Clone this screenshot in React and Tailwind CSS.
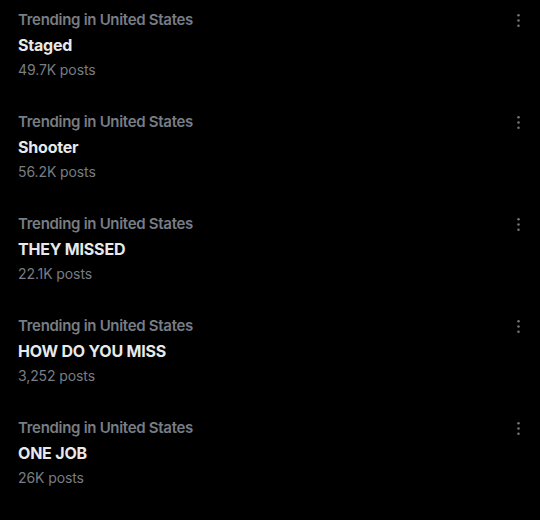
const trends = [
  { topic: "Staged", posts: "49.7K posts" },
  { topic: "Shooter", posts: "56.2K posts" },
  { topic: "THEY MISSED", posts: "22.1K posts" },
  { topic: "HOW DO YOU MISS", posts: "3,252 posts" },
  { topic: "ONE JOB", posts: "26K posts" },
];

function MoreIcon() {
  return (
    <svg viewBox="0 0 24 24" className="w-[19px] h-[19px]" fill="#71767b">
      <circle cx="12" cy="5.5" r="1.6" />
      <circle cx="12" cy="12" r="1.6" />
      <circle cx="12" cy="18.5" r="1.6" />
    </svg>
  );
}

export default function App() {
  return (
    <div
      className="w-[540px] h-[520px] bg-black overflow-hidden"
      style={{ fontFamily: "Inter, 'Noto Sans', sans-serif" }}
    >
      {trends.map((t, i) => (
        <div
          key={i}
          className="h-[102px] flex justify-between pl-[18px] pr-[12px] pt-[10px]"
        >
          <div className="flex flex-col">
            <span className="text-[15px] leading-[20px] font-semibold text-[#787d83] tracking-[-0.3px]">
              Trending in United States
            </span>
            <span className="mt-[4px] text-[16px] leading-[22px] font-bold text-[#e7e9ea] tracking-[-0.2px]">
              {t.topic}
            </span>
            <span className="mt-[4px] text-[14px] leading-[20px] text-[#787d83] tracking-[-0.1px]">
              {t.posts}
            </span>
          </div>
          <button className="h-[20px] w-[20px] flex items-center justify-center">
            <MoreIcon />
          </button>
        </div>
      ))}
    </div>
  );
}
